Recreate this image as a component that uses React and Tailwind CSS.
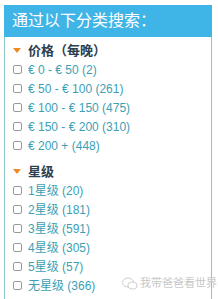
import React from "react";

const font = { fontFamily: '"Liberation Sans", "Noto Sans CJK SC", sans-serif' };

function Row({ label }) {
  return (
    <div className="flex items-center h-[19px]">
      <span className="w-[9px] h-[9px] border border-[#9a9a9a] rounded-[2px] bg-white shrink-0" />
      <span className="ml-[6px] text-[12px] leading-none text-[#3c9fb5]">{label}</span>
    </div>
  );
}

function Heading({ label }) {
  return (
    <div className="flex items-center h-[19px]">
      <span className="w-0 h-0 border-l-[4px] border-r-[4px] border-t-[5px] border-l-transparent border-r-transparent border-t-[#f08a24]" />
      <span className="ml-[7px] text-[13px] font-bold leading-none text-[#2c3e50]">{label}</span>
    </div>
  );
}

export default function App() {
  const prices = ["€ 0 - € 50 (2)", "€ 50 - € 100 (261)", "€ 100 - € 150 (475)", "€ 150 - € 200 (310)", "€ 200 + (448)"];
  const stars = ["1星级 (20)", "2星级 (181)", "3星级 (591)", "4星级 (305)", "5星级 (57)", "无星级 (366)"];
  return (
    <div className="w-[218px] h-[299px] bg-white overflow-hidden relative" style={font}>
      <div className="ml-[4px] mt-[5px] w-[208px] h-[310px] border border-[#8fc4c6] rounded-t-[2px]">
        <div className="h-[32px] bg-[#3fb4e6] flex items-center pl-[8px] -mt-px -mx-px">
          <span className="text-white text-[16px] leading-none">通过以下分类搜索：</span>
        </div>
        <div className="pl-[8px] pt-[4px]">
          <Heading label="价格（每晚）" />
          {prices.map((p) => (
            <Row key={p} label={p} />
          ))}
          <div className="h-[7px]" />
          <Heading label="星级" />
          {stars.map((s) => (
            <Row key={s} label={s} />
          ))}
        </div>
      </div>
      <div className="absolute left-[122px] top-[277px] flex items-center whitespace-nowrap text-[#c8c8c8] text-[11px] leading-none">
        <svg width="16" height="13" viewBox="0 0 16 13" className="mr-[2px]">
          <ellipse cx="6" cy="5.5" rx="5.5" ry="4.5" fill="none" stroke="#cccccc" strokeWidth="1" />
          <ellipse cx="10.5" cy="8.5" rx="4.5" ry="3.5" fill="white" stroke="#cccccc" strokeWidth="1" />
        </svg>
        <span>我带爸爸看世界</span>
      </div>
    </div>
  );
}
